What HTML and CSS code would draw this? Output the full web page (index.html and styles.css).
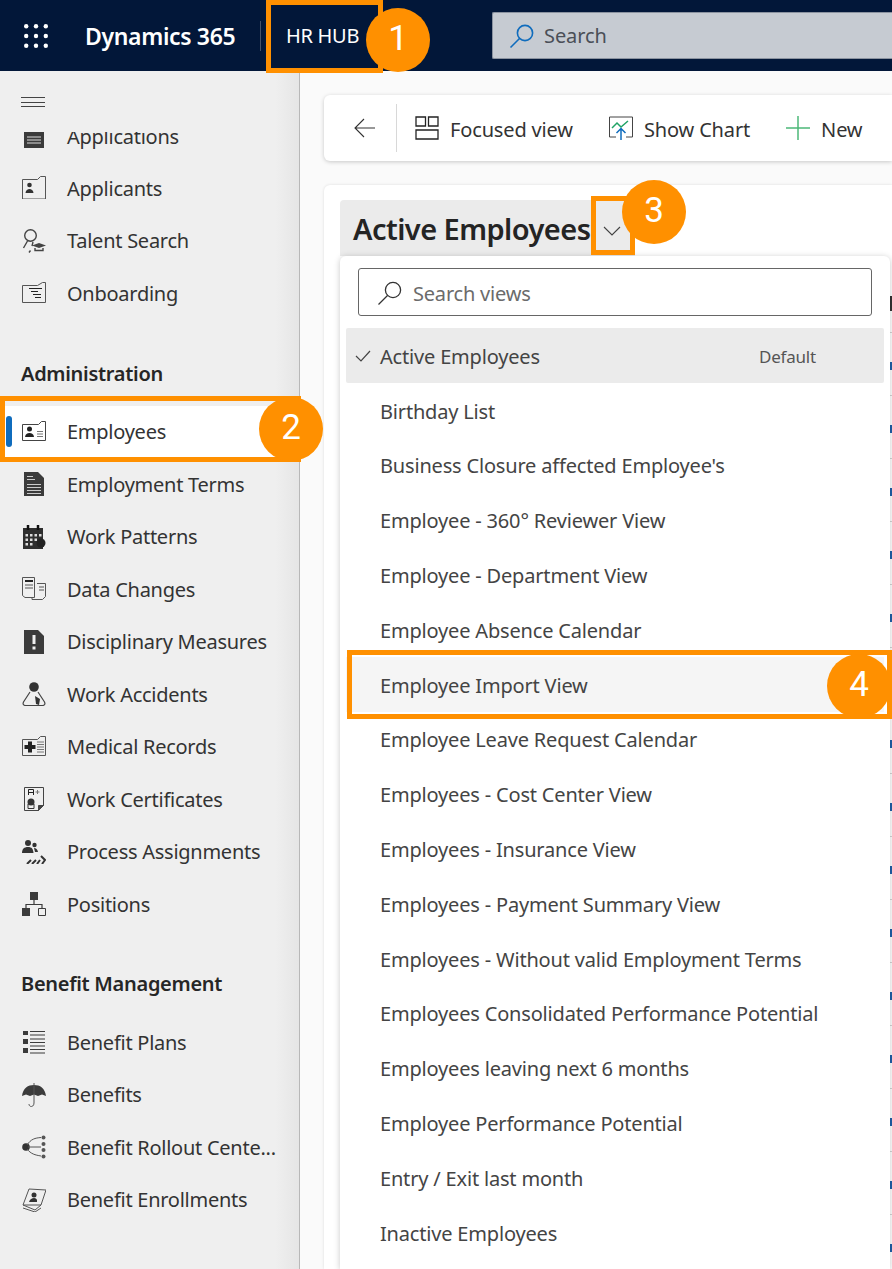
FILE: index.html
```html
<!DOCTYPE html>
<html lang="en">
<head>
<meta charset="utf-8">
<title>HR HUB</title>
<link rel="stylesheet" href="styles.css">
</head>
<body>
<header class="topbar">
  <svg class="waffle" width="24" height="24" viewBox="0 0 24 24" fill="#fff"><circle cx="2.2" cy="2.2" r="2.2"/><circle cx="12" cy="2.2" r="2.2"/><circle cx="21.800" cy="2.2" r="2.2"/><circle cx="2.2" cy="12" r="2.2"/><circle cx="12" cy="12" r="2.2"/><circle cx="21.800" cy="12" r="2.2"/><circle cx="2.2" cy="21.800" r="2.2"/><circle cx="12" cy="21.800" r="2.2"/><circle cx="21.800" cy="21.800" r="2.2"/></svg>
  <span class="brand">Dynamics 365</span>
  <span class="divider"></span>
  <span class="app-name">HR HUB</span>
  <div class="global-search">
    <svg width="26" height="26" viewBox="0 0 26 26" fill="none" stroke="#0f6cbd" stroke-width="1.6"><circle cx="16" cy="10" r="7.6"/><path d="M10.5 15.5 1.5 24.5"/></svg>
    <span>Search</span>
  </div>
</header>
<div class="shell">
  <nav class="sidebar">
    <div class="hamburger"><span></span><span></span><span></span></div>
    <div class="nav-clip">
      <a class="nav-item clipped"><svg class="ic" viewBox="0 0 24 24"><path d="M2 6h5l1-2h8l1 2h5v18H2z" fill="#3b3b3b"/><path d="M5 13h14M5 16h14M5 19h14" stroke="#ddd"/></svg><span>Applications</span></a>
    </div>
    <a class="nav-item"><svg class="ic" viewBox="0 0 24 24" fill="none" stroke="#555"><path d="M.5 23V3.500h15l3-3h5V23"/><circle cx="7.500" cy="9" r="2.300" fill="#333" stroke="none"/><path d="M3.500 17c.5-3 2-4 4-4s3.500 1 4 4z" fill="#333" stroke="none"/><path d="M.5 22.500h23" stroke-dasharray="1 1"/></svg><span>Applicants</span></a>
    <a class="nav-item"><svg class="ic" viewBox="0 0 24 24" fill="none" stroke="#444" stroke-width="1.400"><circle cx="8.500" cy="6.500" r="5.800"/><path d="M5.500 12 1.500 19M11 13l-1 4"/><path d="M10 16.500l7-2.500 7 2.500-7 2.500z" fill="#444" stroke="none"/><path d="M13 19v2.500h8V19M7 23.500l1.500-2"/></svg><span>Talent Search</span></a>
    <a class="nav-item"><svg class="ic" viewBox="0 0 24 24" fill="none" stroke="#555"><path d="M.5 4.500h15l5-3h3v20H.5z"/><path d="M7 7.500h13M9 10.500h7M11 13.500h8M13 16.500h6" stroke="#222" stroke-width="1.200"/></svg><span>Onboarding</span></a>

    <h2 class="nav-group first">Administration</h2>
    <a class="nav-item active"><svg class="ic" viewBox="0 0 24 24" fill="none" stroke="#444"><path d="M.5 4.500h16l3-3h4v19H.5z"/><circle cx="7.500" cy="9" r="2.500" fill="#222" stroke="none"/><path d="M3 17c.5-3 2-4 4.500-4s4 1 4.500 4z" fill="#222" stroke="none"/><path d="M15 11.500h6M15 14h6M15 16.500h6" stroke="#777"/></svg><span>Employees</span></a>
    <a class="nav-item"><svg class="ic" viewBox="0 0 24 24"><path d="M2 0h14l6 6v18H2z" fill="#3b3b3b"/><path d="M5 4.500h6M5 7.500h8M5 12.500h14M5 15.500h14M5 18.500h14M5 21.500h14" stroke="#ccc"/></svg><span>Employment Terms</span></a>
    <a class="nav-item"><svg class="ic" viewBox="0 0 24 24"><path d="M1 3h20v21H1z" fill="#2e2e2e"/><path d="M6 0v5M16 0v5" stroke="#111" stroke-width="2.500"/><path d="M3.500 9h2.500v2.500H3.500zM8 9h2.500v2.500H8zM12.500 9H15v2.500h-2.500zM17 9h2.500v2.500H17zM3.500 13.500h2.500V16H3.500zM8 13.500h2.500V16H8zM12.500 13.500H15V16h-2.500zM3.500 18h2.500v2.500H3.500zM8 18h2.500v2.500H8z" fill="#ddd"/><circle cx="19" cy="18" r="4.500" fill="#222"/></svg><span>Work Patterns</span></a>
    <a class="nav-item"><svg class="ic" viewBox="0 0 24 24" fill="none" stroke="#555"><path d="M.5.500h12v20H3l-2.500-2z"/><path d="M3 4h8" stroke="#222" stroke-width="2"/><path d="M3 8h8M3 11h8"/><path d="M15 6.500h8.500v13l-3 3H10v-2"/><path d="M17 10h5M17 13h5"/></svg><span>Data Changes</span></a>
    <a class="nav-item"><svg class="ic" viewBox="0 0 24 24"><path d="M2 0h14l6 6v18H2z" fill="#3b3b3b"/><path d="M10.500 5h3v9h-3zM10.500 16.500h3v3h-3z" fill="#f0f0f0"/></svg><span>Disciplinary Measures</span></a>
    <a class="nav-item"><svg class="ic" viewBox="0 0 24 24" fill="none" stroke="#444" stroke-width="1.200"><circle cx="12" cy="5" r="4.800" fill="#333" stroke="none"/><path d="M8 10 1.500 20c-1 2 0 3.500 2 3.500h17c2 0 3-1.500 2-3.500L16 10"/><path d="M13 14l5 3-1 6-3-1z" fill="#333" stroke="none"/></svg><span>Work Accidents</span></a>
    <a class="nav-item"><svg class="ic" viewBox="0 0 24 24" fill="none" stroke="#555"><path d="M.5 4.500h15l3-3h5v19H.5z"/><path d="M6 6.500h4v3.500h3.500v4H10v3.500H6V14H2.500v-4H6z" fill="#222" stroke="none"/><path d="M15 7h7M15 9.500h7M15 12h7M15 14.500h7M15 17h7" stroke="#777"/></svg><span>Medical Records</span></a>
    <a class="nav-item"><svg class="ic" viewBox="0 0 24 24" fill="none" stroke="#444"><path d="M2.500.500h19v18l-5 5h-14z"/><path d="M16.500 23.500v-5h5z" fill="#444"/><path d="M6.500 8V2.500h5V8M6.500 5.500h5" stroke="#222"/><path d="M13.500 5h4M15.500 3v4" stroke="#777"/><circle cx="9" cy="15" r="3.500" fill="#333" stroke="none"/><path d="M6 17h6v4.500H6z" stroke="#333"/></svg><span>Work Certificates</span></a>
    <a class="nav-item"><svg class="ic" viewBox="0 0 24 24"><circle cx="6" cy="3" r="3" fill="#333"/><circle cx="12.500" cy="5" r="2.200" fill="#333"/><path d="M0 13c0-4 2-6 6-6s5 2 5.500 6z" fill="#333"/><path d="M12 8c2 0 3.500 1.500 4 4h-3z" fill="#333"/><path d="M19 16l4 4-3 4M5 24l4-4M10 24l4-4M15 24l3-4" fill="none" stroke="#333" stroke-width="2"/></svg><span>Process Assignments</span></a>
    <a class="nav-item"><svg class="ic" viewBox="0 0 24 24"><path d="M8 0h8v8H8zM0 16h8v8H0z" fill="#3b3b3b"/><path d="M12 8v4M4 16v-3.500h16V16" fill="none" stroke="#3b3b3b" stroke-width="1.200"/><path d="M16.500 16.500h7v7h-7z" fill="none" stroke="#3b3b3b"/></svg><span>Positions</span></a>

    <h2 class="nav-group second">Benefit Management</h2>
    <a class="nav-item"><svg class="ic" viewBox="0 0 24 24"><path d="M1 1h5v4H1zM1 9h5v5H1zM1 18h5v5H1z" fill="#3b3b3b"/><path d="M8 1.500h15M8 5h15M8 9h15M8 12.500h15M8 16h15M8 19.500h15M8 23h15" stroke="#3b3b3b" stroke-width="1.200"/></svg><span>Benefit Plans</span></a>
    <a class="nav-item"><svg class="ic" viewBox="0 0 24 24"><path d="M0 13C1 5 6 2 12 2s11 3 12 11l-4-1.500-4 1.500-4-1.500-4 1.500-4-1.500z" fill="#3b3b3b"/><path d="M12 0v20c0 4.500-5 4.500-5 1" fill="none" stroke="#555"/></svg><span>Benefits</span></a>
    <a class="nav-item"><svg class="ic" viewBox="0 0 24 24" fill="none" stroke="#555"><circle cx="4" cy="12" r="3.800" fill="#333" stroke="none"/><path d="M5 10C9 4 13 3 19 2.500M6 12h13M5 14c4 5 8 6 14 7"/><g fill="#555" stroke="none"><circle cx="21.500" cy="2.500" r="2"/><circle cx="21.500" cy="9" r="2"/><circle cx="21.500" cy="15" r="2"/><circle cx="21.500" cy="21.500" r="2"/></g></svg><span>Benefit Rollout Cente...</span></a>
    <a class="nav-item"><svg class="ic" viewBox="0 0 24 24" fill="none" stroke="#555"><path d="M7 1l17 1-5 15H1z" fill="#efefef"/><path d="M1 17l12 5 6-5M1 20l12 4 6-4"/><circle cx="12" cy="7" r="2.500" fill="#333" stroke="none"/><path d="M7 14c1-3 3-4 5-4s3.500 1 3 4z" fill="#333" stroke="none"/></svg><span>Benefit Enrollments</span></a>
  </nav>

  <main class="content">
    <section class="cmdbar">
      <button class="cmd back"><svg width="22" height="20" viewBox="0 0 22 20" fill="none" stroke="#333" stroke-width="1.100"><path d="M21 10H1.500M10 1 1 10l9 9"/></svg></button>
      <span class="cmd-sep"></span>
      <button class="cmd"><svg width="24" height="24" viewBox="0 0 24 24" fill="none" stroke="#222" stroke-width="1.300"><path d="M1 1h9.500v9H1zM13.500 1H23v9h-9.500zM1 14h22v9H1z"/></svg><span class="cmd-label">Focused view</span></button>
      <button class="cmd"><svg width="24" height="24" viewBox="0 0 24 24" fill="none"><path d="M7 21H.5V1h23v20H17" stroke="#444"/><path d="M3 12l5-5 4 4 7-6" stroke="#21a366" stroke-width="1.500"/><path d="M12 24V13M7.500 17l4.500-4.500 4.500 4.500" stroke="#0f6cbd" stroke-width="1.500"/></svg><span class="cmd-label">Show Chart</span></button>
      <button class="cmd"><svg width="24" height="24" viewBox="0 0 24 24" stroke="#4cb878" stroke-width="1.500"><path d="M12 0v24M0 12h24"/></svg><span class="cmd-label">New</span></button>
    </section>
    <section class="panel">
      <div class="view-title"><h1>Active Employees</h1><svg class="chev" width="18" height="10" viewBox="0 0 18 10" fill="none" stroke="#444" stroke-width="1.100"><path d="M1 1l8 8 8-8"/></svg></div>
      <div class="col-head"></div>
      <div class="ticks"></div>
      <div class="menu">
        <div class="view-search">
          <svg width="26" height="26" viewBox="0 0 26 26" fill="none" stroke="#333" stroke-width="1.300"><circle cx="16" cy="10" r="7.600"/><path d="M10.500 15.500 1.500 24.500"/></svg>
          <span>Search views</span>
        </div>
        <ul class="views">
          <li class="selected"><svg width="16" height="12" viewBox="0 0 16 12" fill="none" stroke="#444" stroke-width="1.200"><path d="M1 6l5 5L15 1"/></svg><span class="grow">Active Employees</span><span class="def">Default</span></li>
          <li>Birthday List</li>
          <li>Business Closure affected Employee's</li>
          <li>Employee - 360° Reviewer View</li>
          <li>Employee - Department View</li>
          <li>Employee Absence Calendar</li>
          <li class="hover">Employee Import View</li>
          <li>Employee Leave Request Calendar</li>
          <li>Employees - Cost Center View</li>
          <li>Employees - Insurance View</li>
          <li>Employees - Payment Summary View</li>
          <li>Employees - Without valid Employment Terms</li>
          <li>Employees Consolidated Performance Potential</li>
          <li>Employees leaving next 6 months</li>
          <li>Employee Performance Potential</li>
          <li>Entry / Exit last month</li>
          <li>Inactive Employees</li>
        </ul>
      </div>
    </section>
  </main>
</div>

<div class="callout box-1"></div><div class="badge b1">1</div>
<div class="callout box-2"></div><div class="badge b2">2</div>
<div class="callout box-3"></div><div class="badge b3">3</div>
<div class="callout box-4"></div><div class="badge b4">4</div>
</body>
</html>
```
FILE: styles.css
```css
* { box-sizing: border-box; }
html, body { margin: 0; padding: 0; height: 100%; overflow: hidden; }
body { font-family: "Noto Sans", "Open Sans", sans-serif; color: #333; background: #fafafa; width: 892px; height: 1269px; position: relative; }
button { font: inherit; background: none; border: 0; padding: 0; color: inherit; }
ul { margin: 0; padding: 0; list-style: none; }

.topbar { height: 71px; background: #021739; color: #fff; display: flex; align-items: center; padding-left: 24px; overflow: hidden; }
.waffle { flex: none; }
.brand { flex: none; font-size: 23px; font-weight: 600; margin-left: 37px; width: 175px; white-space: nowrap; letter-spacing: -.35px; }
.divider { flex: none; width: 1px; height: 30px; background: #44526b; }
.app-name { flex: none; font-size: 20px; margin-left: 25px; width: 206px; white-space: nowrap; letter-spacing: -.3px; }
.global-search { flex: 1; min-width: 0; height: 47px; background: #c6cbd2; border: 1px solid #8b93a0; border-right: 0; border-radius: 2px 0 0 2px; display: flex; align-items: center; gap: 9px; padding-left: 16px; font-size: 20px; color: #4a4f57; letter-spacing: -.1px; }

.shell { display: flex; height: 1198px; overflow: hidden; }
.sidebar { width: 300px; flex: none; background: linear-gradient(90deg, #efefef 92%, #e6e6e6 99.600%); border-right: 1px solid #b8b8b8; padding-top: 26px; overflow: hidden; }
.hamburger { margin-left: 21px; width: 24px; height: 10px; display: flex; flex-direction: column; justify-content: space-between; }
.hamburger span { height: 1px; background: #444; }
.nav-clip { height: 30px; overflow: hidden; margin-top: 25px; }
.nav-item { height: 52.500px; display: flex; align-items: center; padding-left: 22px; font-size: 20px; color: #333; white-space: nowrap; letter-spacing: -.26px; position: relative; }
.nav-item.clipped { margin-top: -22px; }
.ic { width: 24px; height: 24px; flex: none; margin-right: 21px; }
.nav-group { margin: 0; font-size: 20px; font-weight: 600; color: #262626; padding-left: 21px; line-height: 28px; letter-spacing: -.3px; }
.nav-group.first { margin-top: 40px; margin-bottom: 18px; }
.nav-group.second { margin-top: 39px; margin-bottom: 18.500px; }
.nav-item.active { background: #fff; }
.nav-item.active::before { content: ""; position: absolute; left: 6px; top: 10px; width: 6px; height: 31px; background: #0f6cbd; border-radius: 3px; }

.content { flex: 1; min-width: 0; padding: 24px 0 0 24px; }
.cmdbar { height: 66px; background: #fff; border-radius: 6px 0 0 6px; box-shadow: 0 1px 4px rgba(0,0,0,.2); display: flex; align-items: center; overflow: hidden; }
.cmd { display: flex; align-items: center; gap: 11px; font-size: 20px; color: #333; white-space: nowrap; letter-spacing: -.15px; margin-right: 36px; flex: none; }
.cmd-label { padding-top: 2px; }
.cmd.back { margin: 0 20px 0 30px; }
.cmd-sep { flex: none; width: 1px; height: 48px; background: #d8d8d8; margin-right: 18px; }
.panel { margin-top: 24px; height: 1084px; background: #fff; border-radius: 6px 0 0 0; box-shadow: 0 0 3px rgba(0,0,0,.12); position: relative; padding: 15px 0 0 16px; overflow: hidden; }
.view-title { display: inline-flex; align-items: center; width: 295px; height: 56px; background: #ebebeb; border-radius: 4px 4px 0 0; padding-left: 13px; }
.view-title h1 { margin: 0; font-size: 29px; font-weight: 600; color: #242424; white-space: nowrap; letter-spacing: -.55px; }
.chev { margin-left: 13px; margin-top: 6px; flex: none; }
.col-head { position: absolute; right: 0; top: 111px; width: 2px; height: 15px; background: #333; }
.ticks { position: absolute; right: 0; top: 147px; width: 2px; bottom: 0; background: repeating-linear-gradient(180deg, #d4d4d4 0 1px, transparent 1px 30px, #1f5fa8 30px 38px, transparent 38px 63px); }
.menu { position: absolute; left: 16px; top: 71px; width: 550px; height: 1013px; background: #fff; border-radius: 6px 6px 0 0; box-shadow: 0 1px 6px rgba(0,0,0,.22); padding: 12px 6px 0; }
.view-search { margin: 0 12px; height: 48px; border: 1px solid #666; border-radius: 3px; display: flex; align-items: center; gap: 10px; padding: 2px 0 0 18px; font-size: 20px; color: #6b6b6b; letter-spacing: -.2px; }
.views { margin-top: 12px; }
.views li { height: 54.800px; display: flex; align-items: center; padding: 2px 0 0 34px; font-size: 20px; color: #444; white-space: nowrap; letter-spacing: -.18px; }
.views li.selected { background: #ebebeb; padding-left: 9px; border-radius: 2px; }
.views li.selected svg { margin-right: 9px; flex: none; }
.views li.hover { background: #f5f5f5; }
.grow { flex: 1; }
.def { font-size: 17px; color: #555; margin-right: 68px; letter-spacing: -.2px; }

.callout { position: absolute; border: 5px solid #ff9000; }
.box-1 { left: 266px; top: 0; width: 117px; height: 73px; }
.box-2 { left: 0; top: 396px; width: 301px; height: 66px; }
.box-3 { left: 591px; top: 196px; width: 44px; height: 59px; }
.box-4 { left: 347px; top: 650px; width: 545px; height: 69px; }
.badge { position: absolute; width: 64px; height: 64px; border-radius: 50%; background: #ff9000; color: #fff; font-family: "Roboto", "Noto Sans", sans-serif; font-size: 35px; display: flex; align-items: center; justify-content: center; padding-bottom: 4px; }
.b1 { left: 366px; top: 8px; }
.b2 { left: 259px; top: 397px; }
.b3 { left: 622px; top: 180px; }
.b4 { left: 827px; top: 654px; }
```
